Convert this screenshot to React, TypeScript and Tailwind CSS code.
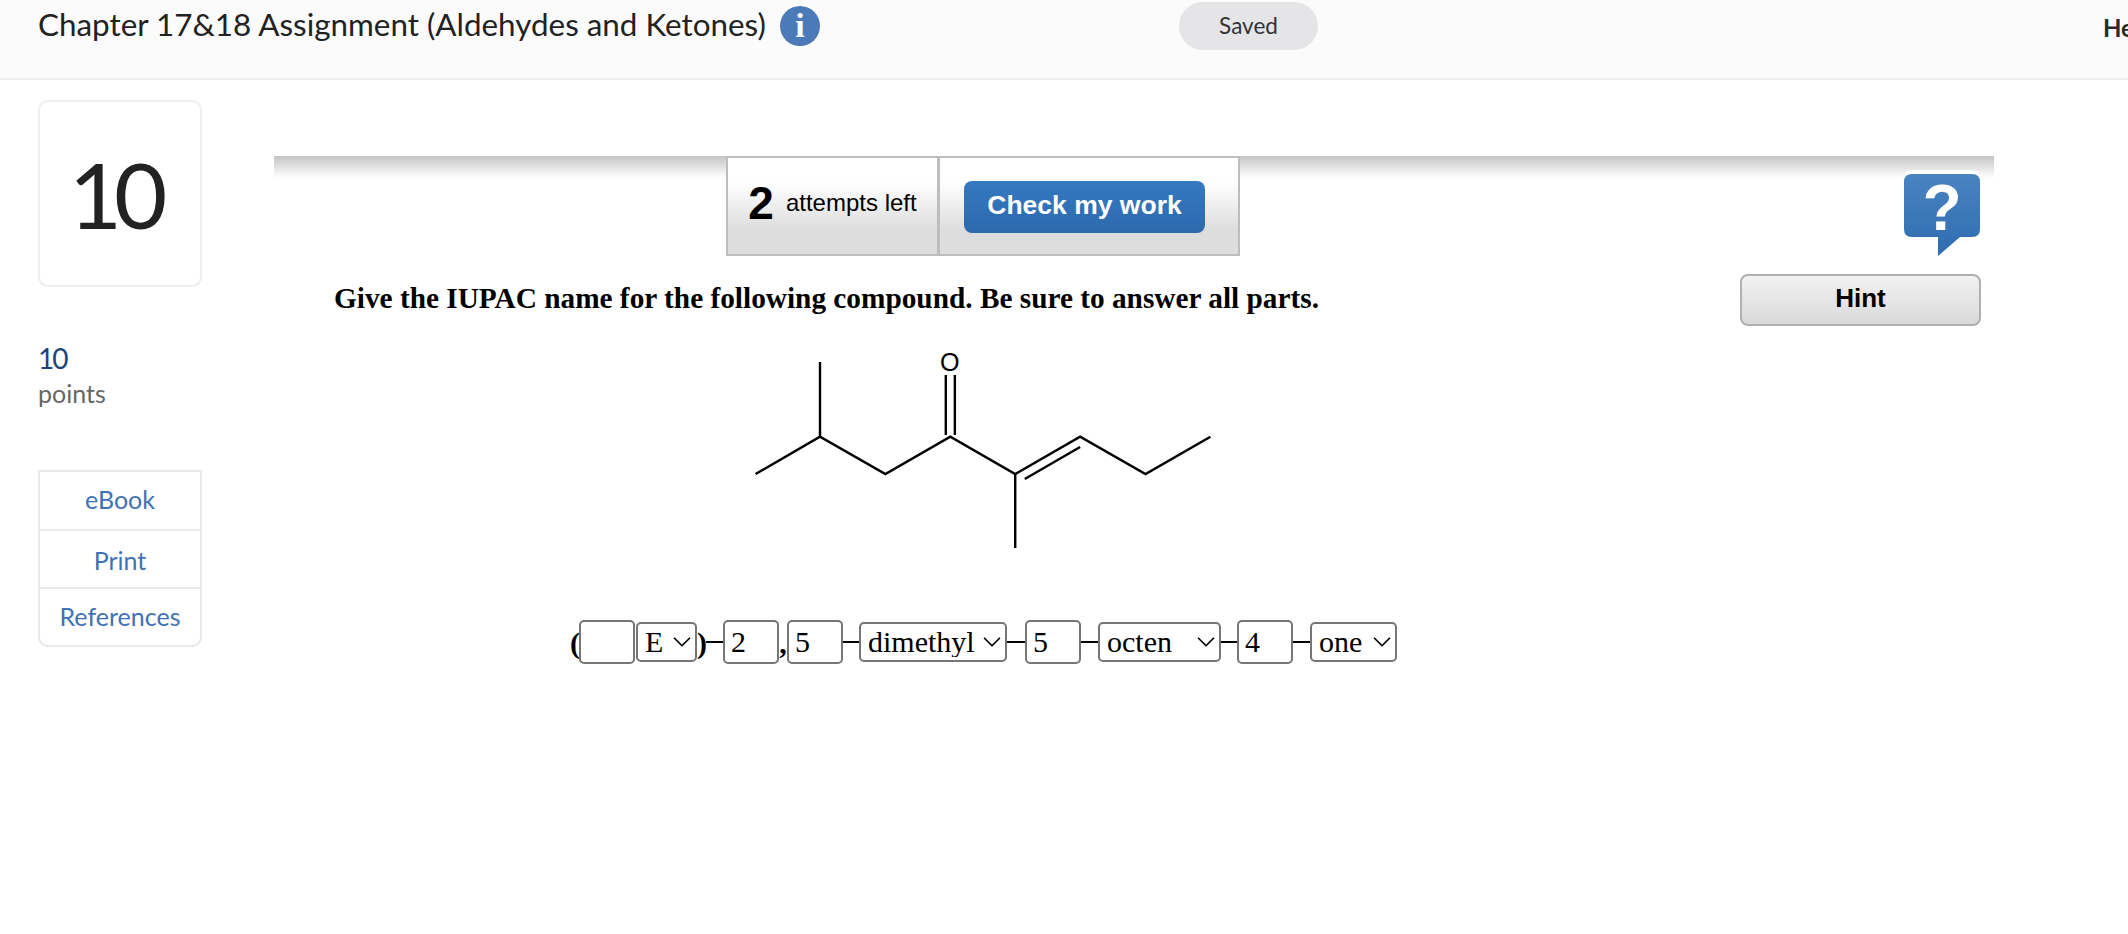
import { ChevronDown } from "lucide-react"

const sans = "font-['Lato','Noto_Sans',sans-serif]"
const serif = "font-['Liberation_Serif','Times_New_Roman',serif]"

function Blank({ value }: { value?: string }) {
  return (
    <input
      readOnly
      value={value ?? ""}
      className="h-[44px] w-[56px] shrink-0 rounded-[5px] border-2 border-[#767676] bg-white px-[6px] pb-[2px] text-[30px] text-black"
    />
  )
}

function Pick({ value, width }: { value: string; width: string }) {
  return (
    <div className={`relative h-[40px] shrink-0 ${width}`}>
      <select
        value={value}
        onChange={() => {}}
        className="block h-full w-full appearance-none rounded-[5px] border-2 border-[#767676] bg-white pl-[7px] text-[30px] leading-none text-black"
      >
        <option>{value}</option>
      </select>
      <ChevronDown
        size={30}
        strokeWidth={1.4}
        className="pointer-events-none absolute right-0 top-[5px] text-black"
      />
    </div>
  )
}

function Dash({ width = "w-[16px]" }: { width?: string }) {
  return <span className={`h-[2px] shrink-0 bg-black ${width}`} />
}

function HelpBubble() {
  return (
    <svg width="76" height="86" viewBox="0 0 76 86" className="block overflow-visible">
      <defs>
        <linearGradient id="bubble" x1="0" y1="0" x2="0" y2="1">
          <stop offset="0" stopColor="#4a83c2" />
          <stop offset="1" stopColor="#2e6cb0" />
        </linearGradient>
      </defs>
      <path d="M8 0H68Q76 0 76 8V12H0V8Q0 0 8 0Z" fill="#fff" />
      <path
        d="M8 4H68Q76 4 76 12V59Q76 67 68 67H56L34 86V67H8Q0 67 0 59V12Q0 4 8 4Z"
        fill="url(#bubble)"
      />
      <text
        x="38"
        y="60"
        textAnchor="middle"
        fill="#fff"
        fontSize="64"
        fontWeight="700"
        fontFamily="'Liberation Sans', Arial, sans-serif"
      >
        ?
      </text>
    </svg>
  )
}

function Molecule() {
  return (
    <svg
      width="480"
      height="210"
      viewBox="740 350 477 210"
      preserveAspectRatio="none"
      className="block overflow-visible"
    >
      <g fill="none" stroke="#000" strokeWidth="2.4">
        <polyline points="755.5,474 819.5,436.7 884.5,474 949,436.7 1013.5,474 1078,436.7 1143,474 1207.5,436.7" />
        <line x1="819.5" y1="436.7" x2="819.5" y2="362" />
        <line x1="1013.5" y1="474" x2="1013.5" y2="548" />
        <line x1="1023" y1="479" x2="1078" y2="447" />
        <line x1="944.5" y1="375" x2="944.5" y2="435" />
        <line x1="953.5" y1="375" x2="953.5" y2="435" />
      </g>
      <text
        x="948.5"
        y="371"
        textAnchor="middle"
        fontSize="25"
        fill="#000"
        fontFamily="'Liberation Sans', Arial, sans-serif"
      >
        O
      </text>
    </svg>
  )
}

export default function App() {
  return (
    <div className={`h-[934px] w-[2128px] overflow-hidden bg-white ${sans}`}>
      <header className="flex h-[80px] items-start border-b-2 border-[#eeeeee] bg-[#fbfbfb]">
        <div className="flex w-[1179px] shrink-0 items-start pl-[38px] pt-[6px]">
          <h1 className="-mt-[2px] text-[31.4px] leading-[40px] text-[#222222]">
            Chapter 17&amp;18 Assignment (Aldehydes and Ketones)
          </h1>
          <span
            className={`ml-[14px] flex h-[40px] w-[40px] items-center justify-center rounded-full bg-[#4a7ab8] text-[34px] font-bold leading-none text-white ${serif}`}
          >
            i
          </span>
        </div>
        <div className="mt-[2px] flex h-[48px] w-[139px] shrink-0 items-center justify-center rounded-full bg-[#e5e4e7] text-[22.5px] text-[#333333]">
          Saved
        </div>
        <div className="ml-[785px] mt-[10px] whitespace-nowrap text-[24px] font-bold text-[#2b2b2b]">
          Help
        </div>
      </header>

      <main className="flex">
        <aside className="ml-[38px] w-[164px] shrink-0 pt-[20px]">
          <div className="flex h-[187px] w-[164px] items-center justify-center rounded-[10px] border-2 border-[#eeeeee] pr-[12px] text-[92px] leading-none tracking-[-8px] text-[#222222]">
            10
          </div>
          <div className="mt-[53px] text-[28px] leading-[36px] tracking-[-2px] text-[#1d4479]">10</div>
          <div className="text-[25px] leading-[34px] text-[#666666]">points</div>
          <nav className="mt-[60px] flex h-[177px] flex-col rounded-b-[10px] border-2 border-[#e8e8e8] text-center text-[25px] text-[#3f72b3]">
            <a className="flex h-[59px] items-center justify-center border-b-2 border-[#e8e8e8] pb-[2px]">eBook</a>
            <a className="flex h-[58px] items-center justify-center border-b-2 border-[#e8e8e8] pt-[4px]">Print</a>
            <a className="flex flex-1 items-center justify-center">References</a>
          </nav>
        </aside>

        <section className="ml-[72px] mt-[76px] w-[1720px] shrink-0">
          <div className="flex h-[100px] bg-[linear-gradient(#c4c4c4,#ffffff_22px)] pl-[452px] pr-[14px]">
            <div className="flex h-[100px] w-[514px] border-2 border-[#bdbdbd] font-['Liberation_Sans',Arial,sans-serif]">
              <div className="flex w-[209px] items-center justify-center gap-[12px] bg-[linear-gradient(#ffffff_25%,#dddddd_75%)] pb-[6px]">
                <span className="text-[46px] font-bold leading-none text-black">2</span>
                <span className="text-[24px] text-black">attempts left</span>
              </div>
              <div className="w-[3px] bg-[#bdbdbd]" />
              <div className="flex flex-1 items-start bg-[linear-gradient(#ffffff_25%,#dddddd_75%)] pl-[24px] pt-[23px]">
                <button className="h-[52px] w-[241px] rounded-[8px] bg-[linear-gradient(#3579c2,#2d69ad)] pb-[2px] text-[26.5px] font-bold text-white">
                  Check my work
                </button>
              </div>
            </div>
            <div className="ml-auto pt-[14px]">
              <HelpBubble />
            </div>
          </div>

          <div className="mt-[19px] flex items-start pl-[60px] pr-[13px]">
            <p className={`pt-[3px] text-[29.3px] font-bold leading-[40px] text-black ${serif}`}>
              Give the IUPAC name for the following compound. Be sure to answer all parts.
            </p>
            <button className="-mt-px ml-auto h-[52px] w-[241px] rounded-[8px] border-2 border-[#b0b0b0] bg-[linear-gradient(#f2f2f2,#d9d9d9)] pb-[4px] font-['Liberation_Sans',Arial,sans-serif] text-[26px] font-bold text-black">
              Hint
            </button>
          </div>

          <div className="ml-[466px] mt-[24px]">
            <Molecule />
          </div>

          <div className={`ml-[296px] mt-[60px] flex h-[44px] items-center text-[30px] text-black ${serif}`}>
            <span className="w-[9px] font-bold">(</span>
            <Blank />
            <span className="w-[1px]" />
            <Pick value="E" width="w-[61px]" />
            <span className="w-[9px] font-bold">)</span>
            <Dash width="w-[17px]" />
            <Blank value="2" />
            <span className="flex w-[8px] justify-center font-bold">,</span>
            <Blank value="5" />
            <Dash />
            <Pick value="dimethyl" width="w-[148px]" />
            <Dash width="w-[18px]" />
            <Blank value="5" />
            <Dash width="w-[17px]" />
            <Pick value="octen" width="w-[123px]" />
            <Dash />
            <Blank value="4" />
            <Dash width="w-[17px]" />
            <Pick value="one" width="w-[87px]" />
          </div>
        </section>
      </main>
    </div>
  )
}
